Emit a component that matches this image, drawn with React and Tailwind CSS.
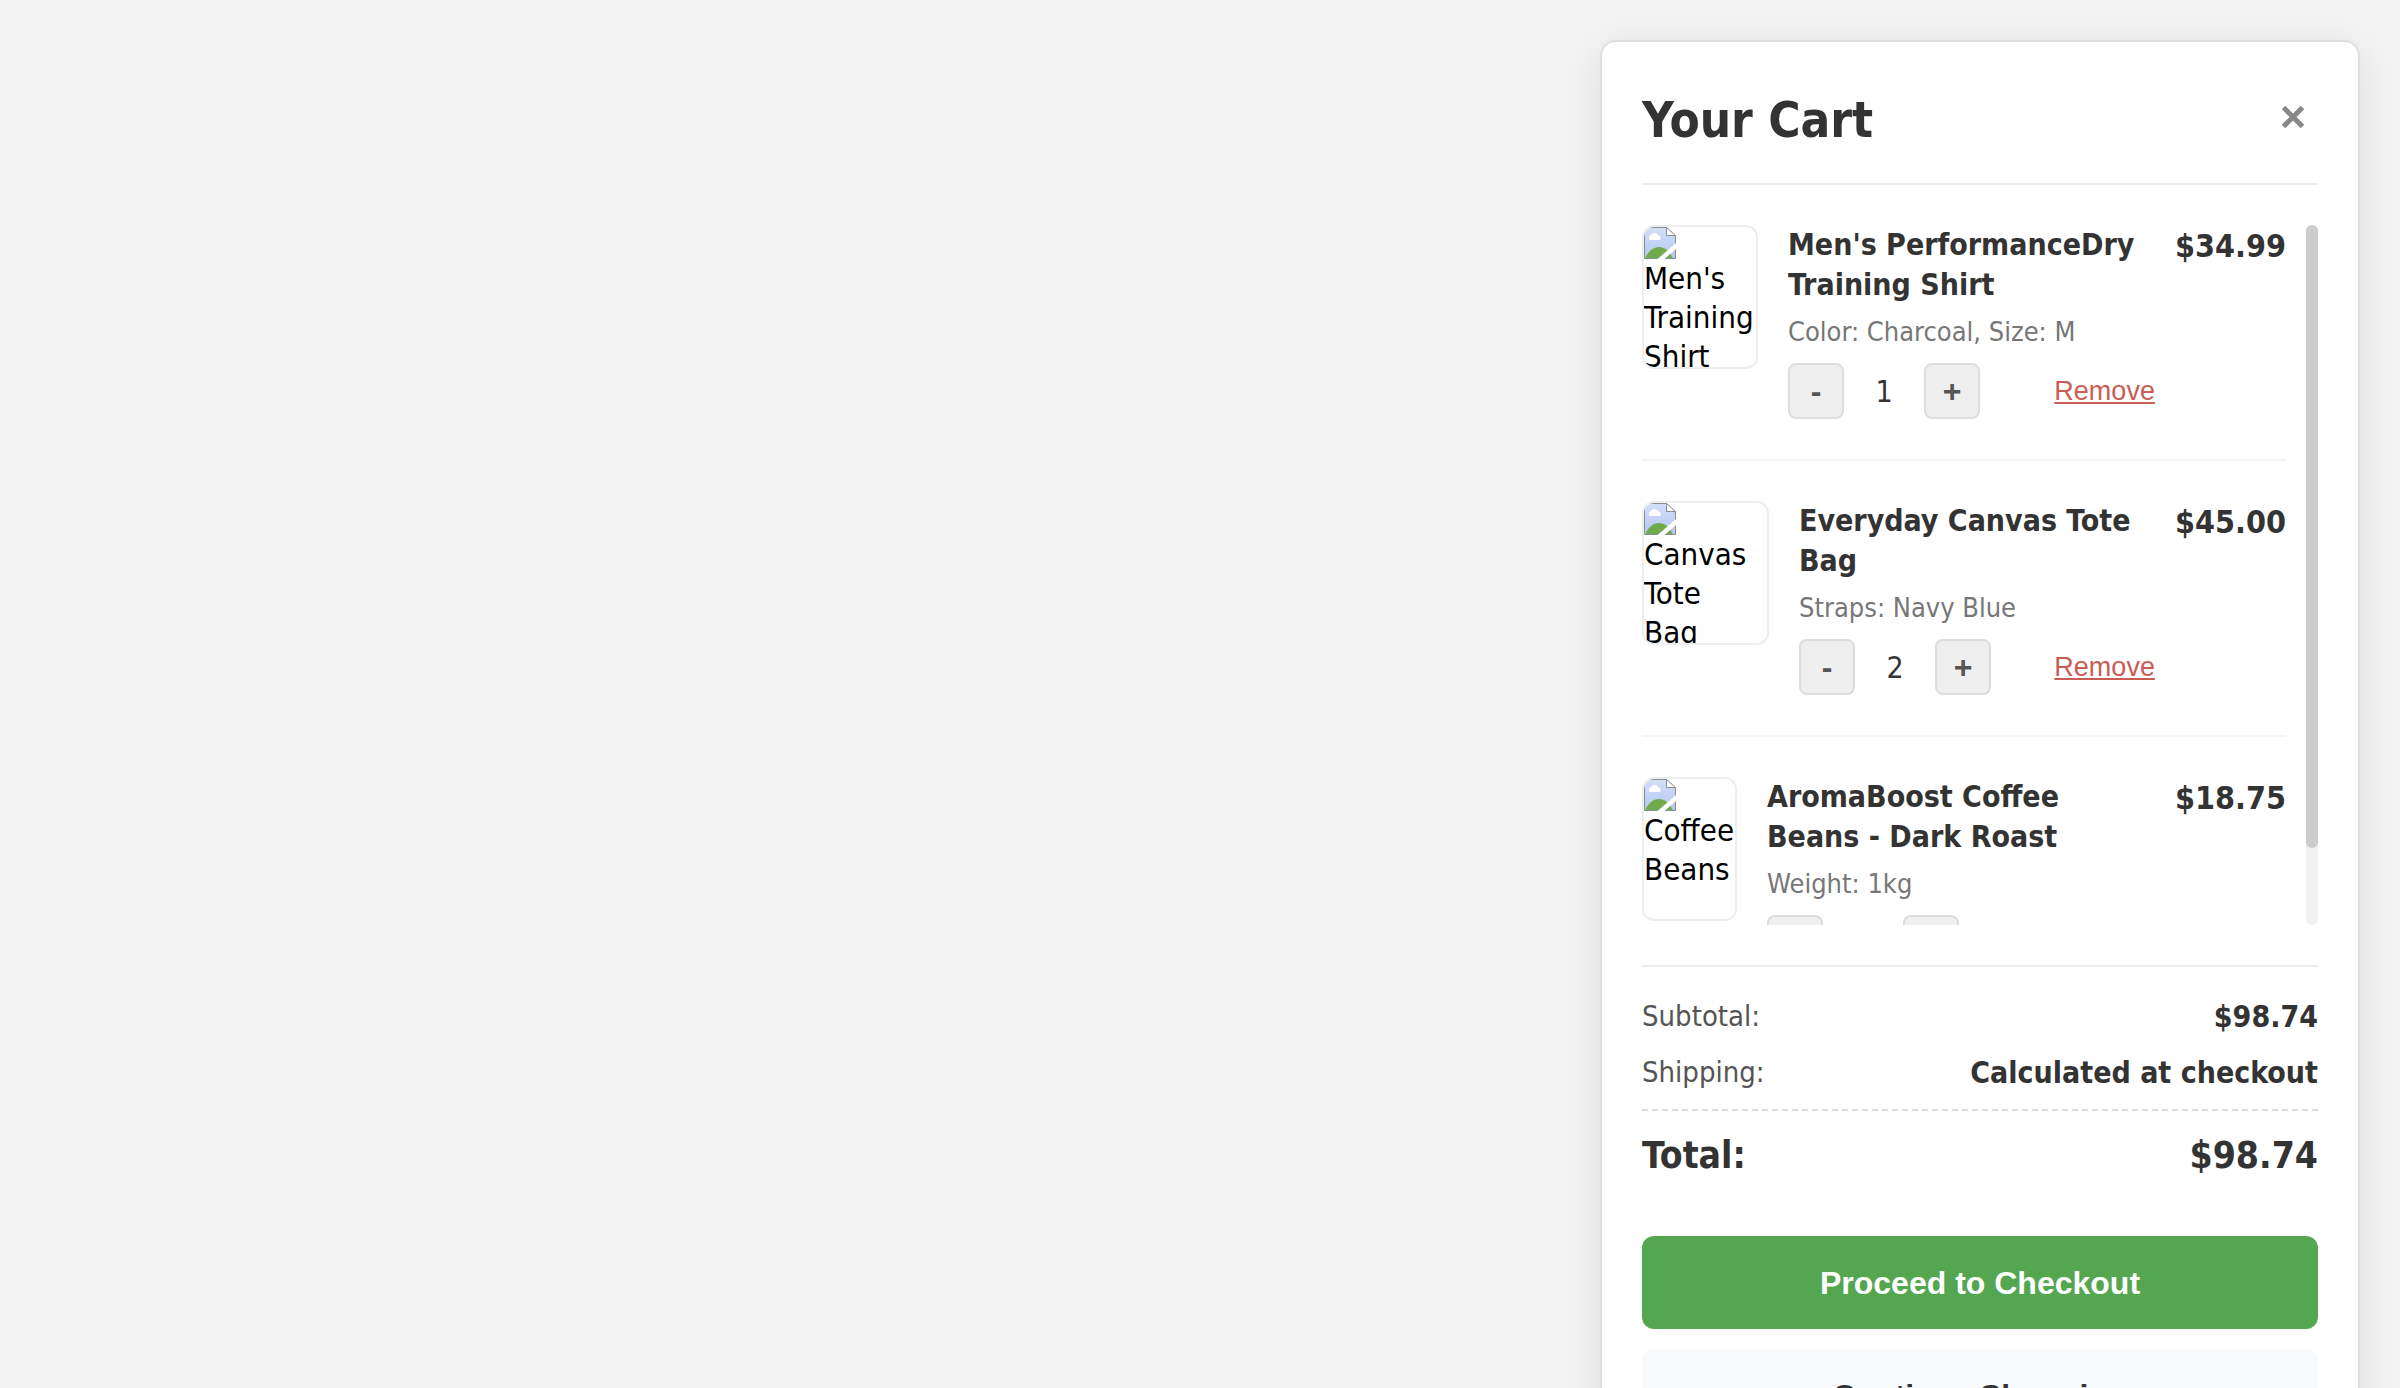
function BrokenImage() {
  return (
    <svg viewBox="0 0 32 32" className="block size-8 shrink-0" aria-hidden="true">
      <defs>
        <linearGradient id="sky" x1="0" y1="0" x2="0" y2="1">
          <stop offset="0" stopColor="#d3dff8" />
          <stop offset="1" stopColor="#b3c7ee" />
        </linearGradient>
      </defs>
      <path d="M.5 .5H22.5L31.5 9V31.5H.5Z" fill="url(#sky)" />
      <path d="M5.5 13a2.8 2.8 0 0 1 .8-4.4a4.6 4.6 0 0 1 8.4 0a2.6 2.6 0 0 1 1.3 4.4Z" fill="#fff" />
      <path d="M1 31.5C4 24.5 9 20 15 20C21 20 26 24.5 29 31.5Z" fill="#6faa4d" />
      <path d="M.5 0V31.5H32" fill="none" stroke="#8a8d93" />
      <path d="M0 .5H22.5L31.5 9V32" fill="none" stroke="#8a8d93" />
      <path d="M22.5 .5V8.5H31.5Z" fill="#fff" stroke="#8a8d93" />
      <path d="M13.5 32L32 16V22L20.5 32Z" fill="#fff" />
    </svg>
  );
}

const items = [
  { name: "Men's PerformanceDry Training Shirt", alt: "Men's Training Shirt", meta: "Color: Charcoal, Size: M", qty: 1, price: "$34.99", thumb: "w-[116px]" },
  { name: "Everyday Canvas Tote Bag", alt: "Canvas Tote Bag", meta: "Straps: Navy Blue", qty: 2, price: "$45.00", thumb: "w-[127px]" },
  { name: "AromaBoost Coffee Beans - Dark Roast", alt: "Coffee Beans", meta: "Weight: 1kg", qty: 1, price: "$18.75", thumb: "w-[95px]" },
];

function StepButton({ label, children }) {
  return (
    <button
      type="button"
      aria-label={label}
      className="flex size-14 items-center justify-center rounded-lg border-2 border-[#ddd] bg-[#efefef] font-['Liberation_Sans',sans-serif] text-[32px] font-bold text-[#555]"
    >
      {children}
    </button>
  );
}

function CartItem({ item }) {
  return (
    <li className="flex items-start border-b-2 border-[#f5f5f5] pb-10 last:border-b-0">
      <div
        role="img"
        aria-label={item.alt}
        className={"mr-[30px] h-36 shrink-0 overflow-hidden rounded-xl border-2 border-[#eee] text-[31px] leading-[39px] text-black " + item.thumb}
      >
        <BrokenImage />
        <p className="w-min">{item.alt}</p>
      </div>
      <div className="min-w-0 flex-1">
        <h3 className="text-[30px] leading-10 font-bold">{item.name}</h3>
        <p className="mt-2.5 text-[27px] leading-[34px] text-[#777]">{item.meta}</p>
        <div className="mt-3.5 flex items-center justify-between">
          <div className="flex items-center">
            <StepButton label="Decrease quantity">-</StepButton>
            <span className="w-20 text-center text-[30px]">{item.qty}</span>
            <StepButton label="Increase quantity">+</StepButton>
          </div>
          <button type="button" className="font-['Liberation_Sans',sans-serif] text-[27px] text-[#cb5c55] underline">
            Remove
          </button>
        </div>
      </div>
      <span className="ml-5 text-[32px] leading-[42px] font-bold">{item.price}</span>
    </li>
  );
}

export default function App() {
  return (
    <div className="flex h-screen items-start justify-end overflow-hidden bg-[#f4f4f4] p-10 font-['DejaVu_Sans_Condensed',sans-serif] text-[#333]">
      <section className="w-full max-w-[760px] shrink-0 rounded-2xl border-2 border-[#e0e0e0] bg-white p-10 shadow-[0_8px_40px_rgba(0,0,0,0.1)]">
        <header className="flex items-start justify-between border-b-2 border-[#eee] pb-[23px]">
          <h2 className="text-[49px] leading-[78px] font-bold">Your Cart</h2>
          <button type="button" aria-label="Close cart" className="flex h-[70px] w-[50px] items-center justify-center text-[#888]">
            <svg viewBox="0 0 24 24" className="size-6" fill="none" stroke="currentColor" strokeWidth="5">
              <path d="M2.5 2.5L21.5 21.5M21.5 2.5L2.5 21.5" />
            </svg>
          </button>
        </header>

        <div className="mt-10 flex h-[700px] gap-5">
          <ul className="flex flex-1 flex-col gap-10 overflow-y-auto [scrollbar-width:none]">
            {items.map((item) => (
              <CartItem key={item.name} item={item} />
            ))}
          </ul>
          <div className="w-3 rounded-full bg-[#f1f1f1]">
            <div className="h-[89%] rounded-full bg-[#ccc]" />
          </div>
        </div>

        <dl className="mt-10 border-t-2 border-[#eee] pt-[31px] leading-[37px]">
          <div className="flex justify-between">
            <dt className="text-[29px] text-[#555]">Subtotal:</dt>
            <dd className="text-[30px] font-bold">$98.74</dd>
          </div>
          <div className="mt-[19px] flex justify-between">
            <dt className="text-[29px] text-[#555]">Shipping:</dt>
            <dd className="text-[30px] font-bold">Calculated at checkout</dd>
          </div>
          <div className="mt-[18px] flex justify-between border-t-2 border-dashed border-[#ddd] pt-5 text-[37px] leading-[50px] font-bold">
            <dt>Total:</dt>
            <dd>$98.74</dd>
          </div>
        </dl>

        <div className="mt-[55px] flex flex-col gap-5 font-['Liberation_Sans',sans-serif] text-[32px] font-bold">
          <button type="button" className="h-[93px] rounded-xl bg-[#54a651] text-white">
            Proceed to Checkout
          </button>
          <button type="button" className="h-[93px] rounded-xl bg-[#f8f9fb] text-[#333]">
            Continue Shopping
          </button>
        </div>
      </section>
    </div>
  );
}
